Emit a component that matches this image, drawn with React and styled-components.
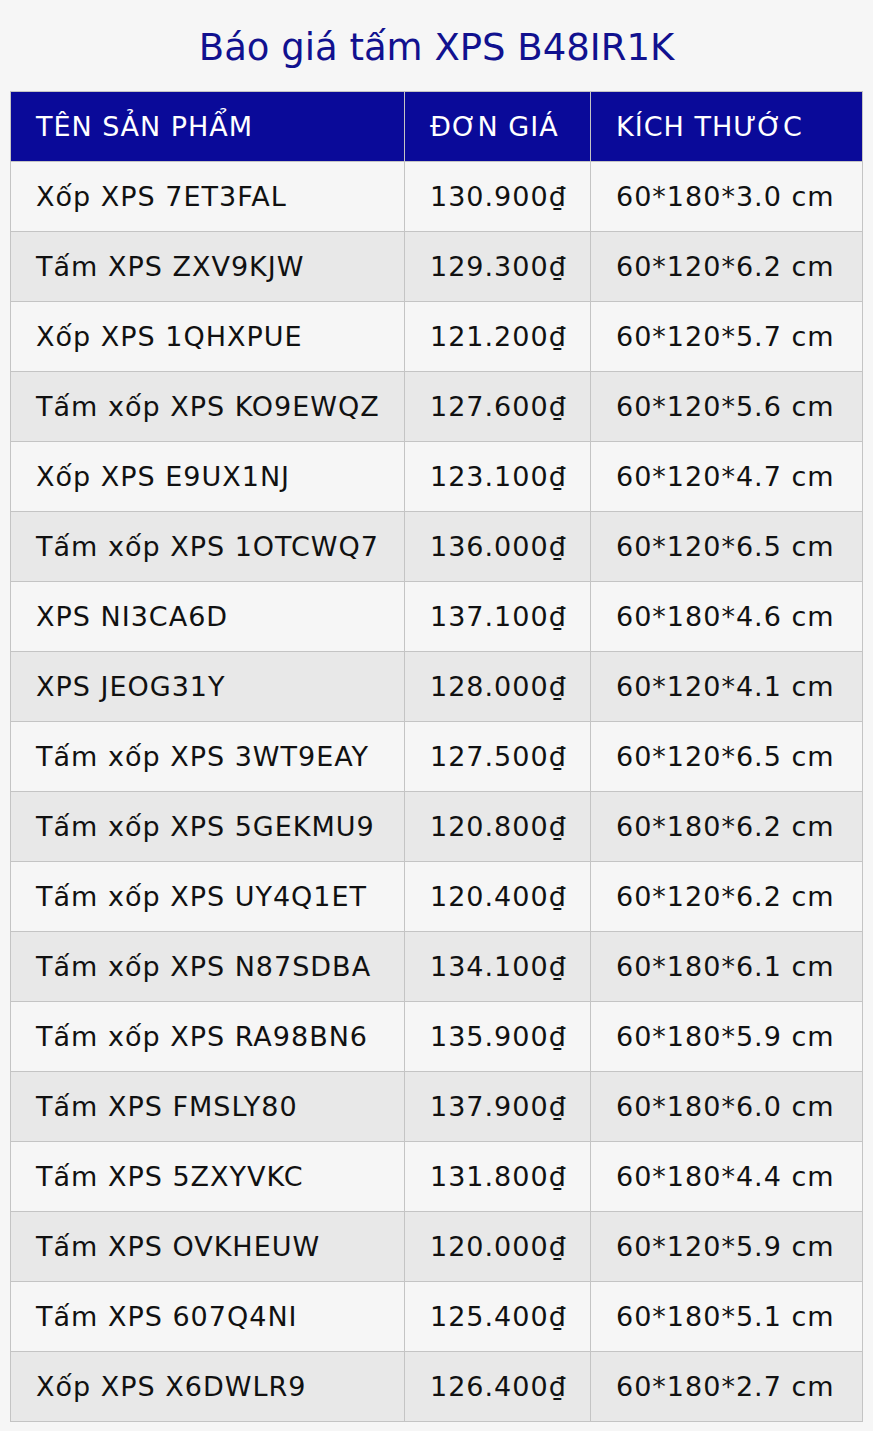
import React from "react";
import styled, { createGlobalStyle } from "styled-components";

const Global = createGlobalStyle`
  html, body { margin: 0; padding: 0; background: #f6f6f6; }
  body { font-family: "DejaVu Sans", Verdana, sans-serif; }
`;

const Page = styled.div`
  padding: 0 10px 10px;
`;

const Title = styled.h1`
  margin: 0;
  padding: 26px 0 21px;
  font-size: 37px;
  line-height: 44px;
  font-weight: normal;
  text-align: center;
  color: #11118f;
`;

const Table = styled.table`
  width: 852px;
  border-collapse: collapse;
  table-layout: fixed;
`;

const cell = `
  font-size: 27px;
  letter-spacing: 1px;
  padding: 0 25px;
  height: 70px;
  border: 1px solid #c4c4c4;
  box-sizing: border-box;
  white-space: nowrap;
  text-align: left;
`;

const Th = styled.th`
  ${cell}
  background: #0a0a99;
  color: #ffffff;
  font-weight: normal;
`;

const Row = styled.tr`
  background: ${(p) => (p.$alt ? "#e8e8e8" : "#f6f6f6")};
`;

const Td = styled.td`
  ${cell}
  color: #111;
`;

const rows = [
  ["Xốp XPS 7ET3FAL", "130.900", "60*180*3.0 cm"],
  ["Tấm XPS ZXV9KJW", "129.300", "60*120*6.2 cm"],
  ["Xốp XPS 1QHXPUE", "121.200", "60*120*5.7 cm"],
  ["Tấm xốp XPS KO9EWQZ", "127.600", "60*120*5.6 cm"],
  ["Xốp XPS E9UX1NJ", "123.100", "60*120*4.7 cm"],
  ["Tấm xốp XPS 1OTCWQ7", "136.000", "60*120*6.5 cm"],
  ["XPS NI3CA6D", "137.100", "60*180*4.6 cm"],
  ["XPS JEOG31Y", "128.000", "60*120*4.1 cm"],
  ["Tấm xốp XPS 3WT9EAY", "127.500", "60*120*6.5 cm"],
  ["Tấm xốp XPS 5GEKMU9", "120.800", "60*180*6.2 cm"],
  ["Tấm xốp XPS UY4Q1ET", "120.400", "60*120*6.2 cm"],
  ["Tấm xốp XPS N87SDBA", "134.100", "60*180*6.1 cm"],
  ["Tấm xốp XPS RA98BN6", "135.900", "60*180*5.9 cm"],
  ["Tấm XPS FMSLY80", "137.900", "60*180*6.0 cm"],
  ["Tấm XPS 5ZXYVKC", "131.800", "60*180*4.4 cm"],
  ["Tấm XPS OVKHEUW", "120.000", "60*120*5.9 cm"],
  ["Tấm XPS 607Q4NI", "125.400", "60*180*5.1 cm"],
  ["Xốp XPS X6DWLR9", "126.400", "60*180*2.7 cm"],
];

export default function App() {
  return (
    <Page>
      <Global />
      <Title>Báo giá tấm XPS B48IR1K</Title>
      <Table>
        <colgroup>
          <col style={{ width: 394 }} />
          <col style={{ width: 186 }} />
          <col style={{ width: 272 }} />
        </colgroup>
        <thead>
          <tr>
            <Th>TÊN SẢN PHẨM</Th>
            <Th>ĐƠN GIÁ</Th>
            <Th>KÍCH THƯỚC</Th>
          </tr>
        </thead>
        <tbody>
          {rows.map((r, i) => (
            <Row key={i} $alt={i % 2 === 1}>
              <Td>{r[0]}</Td>
              <Td>{r[1]}₫</Td>
              <Td>{r[2]}</Td>
            </Row>
          ))}
        </tbody>
      </Table>
    </Page>
  );
}
